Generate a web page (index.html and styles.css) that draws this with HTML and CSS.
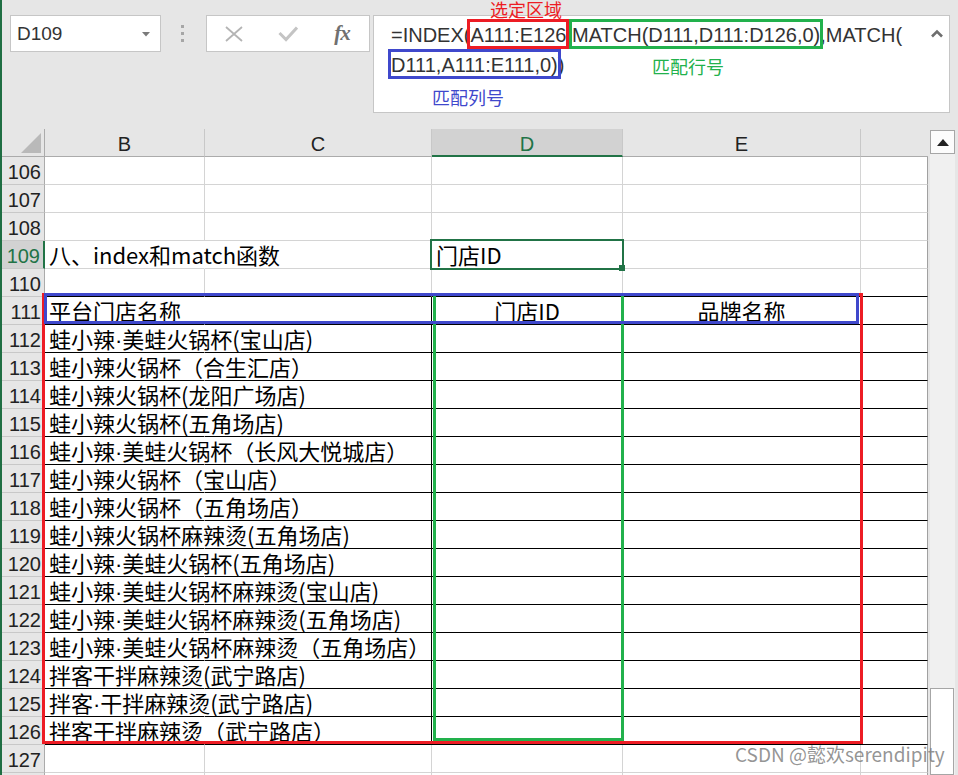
FILE: index.html
```html
<!DOCTYPE html>
<html lang="zh-CN">
<head>
<meta charset="utf-8">
<title>INDEX MATCH</title>
<link rel="stylesheet" href="styles.css">
</head>
<body>
<div class="app">
  <div class="toolbar">
    <div class="namebox">
      <span>D109</span>
      <svg class="dd" width="8" height="5" viewBox="0 0 8 5"><polygon points="0,0 8,0 4,4.5" fill="#7a7a7a"/></svg>
    </div>
    <div class="dots"><i></i><i></i><i></i></div>
    <div class="fbtns">
      <div class="fbtn">
        <svg width="18" height="16" viewBox="0 0 18 16"><path d="M1 1 L17 15 M17 1 L1 15" stroke="#b4b4b4" stroke-width="1.8" fill="none"/></svg>
      </div>
      <div class="fbtn">
        <svg width="20" height="16" viewBox="0 0 20 16"><polyline points="1.5,7 8,13.5 19,1.5" stroke="#c4c4c4" stroke-width="3" fill="none"/></svg>
      </div>
      <div class="fbtn"><span class="fx">fx</span></div>
    </div>
    <div class="fbar">
      <div class="ftext">=INDEX(<span class="rng r">A111:E126</span>,<span class="rng g">MATCH(D111,D111:D126,0)</span>,MATCH(<br><span class="rng b">D111,A111:E111,0)</span>)</div>
      <span class="note note-r">选定区域</span>
      <span class="note note-g">匹配行号</span>
      <span class="note note-b">匹配列号</span>
      <svg class="chev" width="12" height="9" viewBox="0 0 12 9"><polyline points="1,7.5 6,2.5 11,7.5" stroke="#6e6e6e" stroke-width="2.6" fill="none"/></svg>
    </div>
  </div>

  <div class="main">
    <div class="sheet">
      <div class="corner"><svg width="20" height="20" viewBox="0 0 20 20"><polygon points="20,0 20,20 0,20" fill="#b9b9b9"/></svg></div>
      <div class="ch">B</div><div class="ch">C</div><div class="ch hi">D</div><div class="ch">E</div><div class="ch fh"></div>

      <div class="rh">106</div><div class="c"></div><div class="c"></div><div class="c"></div><div class="c"></div><div class="c f"></div>
      <div class="rh">107</div><div class="c"></div><div class="c"></div><div class="c"></div><div class="c"></div><div class="c f"></div>
      <div class="rh">108</div><div class="c"></div><div class="c"></div><div class="c"></div><div class="c"></div><div class="c f"></div>
      <div class="rh hi">109</div><div class="c nb">八、index和match函数</div><div class="c"></div><div class="c sel">门店ID</div><div class="c"></div><div class="c f"></div>
      <div class="rh">110</div><div class="c bkb"></div><div class="c bkb"></div><div class="c bkb"></div><div class="c bkb"></div><div class="c f bkb"></div>
      <div class="rh">111</div><div class="c nb bkb">平台门店名称</div><div class="c bkb bkr"></div><div class="c bkb bkr ctr">门店ID</div><div class="c bkb bkr ctr">品牌名称</div><div class="c f bkb"></div>
      <div class="rh">112</div><div class="c nb bkb">蛙小辣<span class="md">·</span>美蛙火锅杯(宝山店)</div><div class="c bkb bkr"></div><div class="c bkb bkr"></div><div class="c bkb bkr"></div><div class="c f bkb"></div>
      <div class="rh">113</div><div class="c nb bkb">蛙小辣火锅杯（合生汇店）</div><div class="c bkb bkr"></div><div class="c bkb bkr"></div><div class="c bkb bkr"></div><div class="c f bkb"></div>
      <div class="rh">114</div><div class="c nb bkb">蛙小辣火锅杯(龙阳广场店)</div><div class="c bkb bkr"></div><div class="c bkb bkr"></div><div class="c bkb bkr"></div><div class="c f bkb"></div>
      <div class="rh">115</div><div class="c nb bkb">蛙小辣火锅杯(五角场店)</div><div class="c bkb bkr"></div><div class="c bkb bkr"></div><div class="c bkb bkr"></div><div class="c f bkb"></div>
      <div class="rh">116</div><div class="c nb bkb">蛙小辣<span class="md">·</span>美蛙火锅杯（长风大悦城店）</div><div class="c bkb bkr"></div><div class="c bkb bkr"></div><div class="c bkb bkr"></div><div class="c f bkb"></div>
      <div class="rh">117</div><div class="c nb bkb">蛙小辣火锅杯（宝山店）</div><div class="c bkb bkr"></div><div class="c bkb bkr"></div><div class="c bkb bkr"></div><div class="c f bkb"></div>
      <div class="rh">118</div><div class="c nb bkb">蛙小辣火锅杯（五角场店）</div><div class="c bkb bkr"></div><div class="c bkb bkr"></div><div class="c bkb bkr"></div><div class="c f bkb"></div>
      <div class="rh">119</div><div class="c nb bkb">蛙小辣火锅杯麻辣烫(五角场店)</div><div class="c bkb bkr"></div><div class="c bkb bkr"></div><div class="c bkb bkr"></div><div class="c f bkb"></div>
      <div class="rh">120</div><div class="c nb bkb">蛙小辣<span class="md">·</span>美蛙火锅杯(五角场店)</div><div class="c bkb bkr"></div><div class="c bkb bkr"></div><div class="c bkb bkr"></div><div class="c f bkb"></div>
      <div class="rh">121</div><div class="c nb bkb">蛙小辣<span class="md">·</span>美蛙火锅杯麻辣烫(宝山店)</div><div class="c bkb bkr"></div><div class="c bkb bkr"></div><div class="c bkb bkr"></div><div class="c f bkb"></div>
      <div class="rh">122</div><div class="c nb bkb">蛙小辣<span class="md">·</span>美蛙火锅杯麻辣烫(五角场店)</div><div class="c bkb bkr"></div><div class="c bkb bkr"></div><div class="c bkb bkr"></div><div class="c f bkb"></div>
      <div class="rh">123</div><div class="c nb bkb">蛙小辣<span class="md">·</span>美蛙火锅杯麻辣烫（五角场店）</div><div class="c bkb bkr"></div><div class="c bkb bkr"></div><div class="c bkb bkr"></div><div class="c f bkb"></div>
      <div class="rh">124</div><div class="c nb bkb">拌客干拌麻辣烫(武宁路店)</div><div class="c bkb bkr"></div><div class="c bkb bkr"></div><div class="c bkb bkr"></div><div class="c f bkb"></div>
      <div class="rh">125</div><div class="c nb bkb">拌客<span class="md">·</span>干拌麻辣烫(武宁路店)</div><div class="c bkb bkr"></div><div class="c bkb bkr"></div><div class="c bkb bkr"></div><div class="c f bkb"></div>
      <div class="rh">126</div><div class="c nb bkb">拌客干拌麻辣烫（武宁路店）</div><div class="c bkb bkr"></div><div class="c bkb bkr"></div><div class="c bkb bkr"></div><div class="c f bkb"></div>
      <div class="rh">127</div><div class="c"></div><div class="c"></div><div class="c"></div><div class="c"></div><div class="c f"></div>
      <div class="rh">128</div><div class="c"></div><div class="c"></div><div class="c"></div><div class="c"></div><div class="c f"></div>

      <div class="box box-red"></div>
      <div class="box box-green"></div>
      <div class="box box-blue"></div>
    </div>
    <div class="vscroll">
      <div class="up"><svg width="12" height="7" viewBox="0 0 12 7"><polygon points="0,7 12,7 6,0" fill="#222"/></svg></div>
      <div class="track"><div class="thumb"></div></div>
    </div>
  </div>

  <div class="watermark">CSDN @懿欢serendipity</div>
</div>
</body>
</html>
```

FILE: styles.css
```css
body {
  margin: 0;
}

.app {
  width: 958px;
  height: 775px;
  box-sizing: border-box;
  border-left: 2px solid #1f6e43;
  background: #e6e6e6;
  position: relative;
  overflow: hidden;
  font-family: "Liberation Sans", Arial, sans-serif;
}

/* ---------- top toolbar ---------- */
.toolbar {
  height: 129px;
  box-sizing: border-box;
  padding: 15px 0 0 8px;
  display: flex;
  align-items: flex-start;
}

.namebox {
  width: 151px;
  height: 37px;
  box-sizing: border-box;
  border: 1px solid #c6c6c6;
  background: #fff;
  display: flex;
  align-items: center;
  justify-content: space-between;
  padding: 0 10px 0 6px;
  font-size: 19px;
  color: #333;
}

.dd {
  margin-top: 1px;
}

.dots {
  margin-left: 20px;
  margin-top: 10px;
  display: flex;
  flex-direction: column;
  gap: 4px;
}

.dots i {
  display: block;
  width: 3px;
  height: 3px;
  background: #a6a6a6;
}

.fbtns {
  margin-left: 22px;
  width: 164px;
  height: 37px;
  box-sizing: border-box;
  border: 1px solid #c6c6c6;
  background: #fff;
  display: flex;
}

.fbtn {
  width: 54px;
  display: flex;
  align-items: center;
  justify-content: center;
}

.fx {
  font-family: "Liberation Serif", "Times New Roman", serif;
  font-style: italic;
  font-weight: bold;
  font-size: 21px;
  color: #707070;
  letter-spacing: -1px;
}

.fbar {
  margin-left: 3px;
  width: 577px;
  height: 98px;
  box-sizing: border-box;
  border: 1px solid #c6c6c6;
  background: #fff;
  position: relative;
  padding: 4px 0 0 17px;
}

.ftext {
  font-size: 20px;
  line-height: 30px;
  color: #333;
  white-space: nowrap;
}

.rng {
  padding: 2px 0 0;
  outline: 3px solid;
}

.rng.r { outline-color: #ed1c24; }
.rng.g { outline-color: #22b14c; }
.rng.b { outline-color: #3f48cc; }

.note {
  position: absolute;
  font-family: "Noto Sans CJK SC", sans-serif;
  font-size: 18px;
  line-height: 18px;
  white-space: nowrap;
}

.note-r { left: 116px; top: -16px; color: #ed1c24; }
.note-g { left: 278px; top: 41px; color: #22b14c; }
.note-b { left: 58px; top: 72px; color: #3f48cc; }

.chev {
  position: absolute;
  right: 6px;
  top: 13px;
}

/* ---------- sheet ---------- */
.main {
  display: flex;
  height: 646px;
}

.sheet {
  position: relative;
  width: 926px;
  height: 646px;
  overflow: hidden;
  display: grid;
  grid-template-columns: 43px 160px 227px 191px 238px 67px;
  grid-auto-rows: 28px;
  align-content: start;
  background: #fff;
}

.corner {
  background: #e6e6e6;
  border-right: 1px solid #ababab;
  border-bottom: 1px solid #ababab;
  display: flex;
  align-items: flex-end;
  justify-content: flex-end;
  padding: 0 3px 3px 0;
}

.ch {
  background: #e6e6e6;
  border-right: 1px solid #c8c8c8;
  border-bottom: 1px solid #ababab;
  text-align: center;
  font-size: 20px;
  line-height: 26px;
  padding-top: 2px;
  color: #222;
}

.ch.fh {
  border-right: none;
}

.ch.hi {
  background: #d2d2d2;
  color: #217346;
  border-bottom: 2px solid #217346;
}

.rh {
  background: #e6e6e6;
  border-right: 1px solid #ababab;
  border-bottom: 1px solid #c8c8c8;
  text-align: right;
  padding: 2px 3px 0 0;
  font-size: 20px;
  line-height: 26px;
  color: #222;
}

.rh.hi {
  background: #d2d2d2;
  color: #217346;
  border-right: 2px solid #217346;
}

.c {
  border-right: 1px solid #d4d4d4;
  border-bottom: 1px solid #d4d4d4;
  padding-left: 4px;
  font-family: "Noto Sans CJK SC", sans-serif;
  font-size: 22px;
  line-height: 27px;
  white-space: nowrap;
  color: #000;
  min-width: 0;
}

.md {
  font-family: "Liberation Sans", Arial, sans-serif;
}

.c.nb { border-right-color: transparent; }
.c.bkb { border-bottom-color: #000; }
.c.bkr { border-right-color: #000; }
.c.f { border-right-color: #a0a0a0; }
.c.ctr { text-align: center; padding-left: 0; }

.sel {
  position: relative;
}

.sel::before {
  content: "";
  position: absolute;
  left: -2px;
  top: -2px;
  width: 194px;
  height: 31px;
  box-sizing: border-box;
  border: 2px solid #217346;
}

.sel::after {
  content: "";
  position: absolute;
  left: 187px;
  top: 24px;
  width: 6px;
  height: 6px;
  background: #217346;
}

/* annotation boxes drawn over the sheet */
.box {
  position: absolute;
  box-sizing: border-box;
  border: 3px solid;
}

.box-red {
  left: 40px;
  top: 164px;
  width: 821px;
  height: 451px;
  border-color: #ed1c24;
}

.box-green {
  left: 431px;
  top: 164px;
  width: 191px;
  height: 448px;
  border-color: #22b14c;
}

.box-blue {
  left: 42px;
  top: 164px;
  width: 815px;
  height: 31px;
  border-color: #3f48cc;
}

/* ---------- vertical scrollbar ---------- */
.vscroll {
  width: 30px;
  display: flex;
  flex-direction: column;
  padding: 1px 0 0 2px;
  box-sizing: border-box;
}

.up {
  width: 25px;
  height: 24px;
  box-sizing: border-box;
  border: 1px solid #a6a6a6;
  background: #fcfcfc;
  display: flex;
  align-items: center;
  justify-content: center;
}

.track {
  flex: 1;
  width: 25px;
  box-sizing: border-box;
  background: #f0f0f0;
  padding-top: 534px;
  display: flex;
  flex-direction: column;
}

.thumb {
  flex: 1;
  width: 24px;
  box-sizing: border-box;
  background: #fff;
  border: 1px solid #a6a6a6;
}

.watermark {
  position: absolute;
  left: 733px;
  top: 744px;
  font-family: "Noto Sans CJK SC", sans-serif;
  font-size: 19px;
  line-height: 20px;
  color: rgba(130, 130, 130, 0.85);
  white-space: nowrap;
}
```
